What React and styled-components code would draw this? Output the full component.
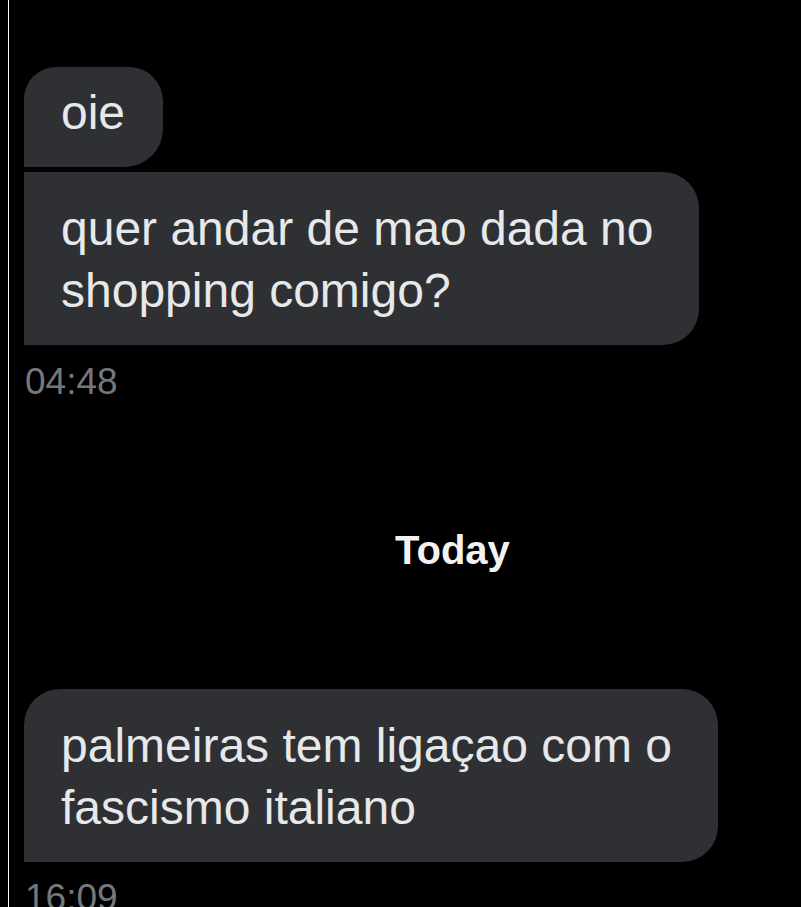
import React from "react";
import styled, { createGlobalStyle } from "styled-components";

const GlobalStyle = createGlobalStyle`
  html, body {
    margin: 0;
    padding: 0;
    background: #000;
  }
  body {
    font-family: "Liberation Sans", Arial, sans-serif;
  }
`;

const Page = styled.div`
  margin-left: 8px;
  border-left: 1px solid #ffffff;
  min-height: 100vh;
  box-sizing: border-box;
  padding: 67px 0 0 15px;
  display: flex;
  flex-direction: column;
  align-items: flex-start;
  overflow: hidden;
  background: #000;
`;

const Group = styled.div`
  display: flex;
  flex-direction: column;
  align-items: flex-start;
  gap: 5px;
  margin-top: ${(p) => p.$top || 0}px;
`;

const Bubble = styled.div`
  background: #2e3034;
  color: #e6e8e9;
  font-size: 48px;
  line-height: 62px;
  padding: ${(p) => (p.$tight ? 15 : 26)}px ${(p) => p.$right || 46}px 23px 37px;
  border-radius: ${(p) => p.$radius};
  white-space: nowrap;
`;

const Time = styled.div`
  margin-top: ${(p) => p.$top || 15}px;
  margin-left: 1px;
  font-size: 37px;
  line-height: 44px;
  color: #74787c;
`;

const DateDivider = styled.div`
  margin-top: 122px;
  padding-left: 371px;
  font-size: 40px;
  line-height: 48px;
  font-weight: 700;
  color: #f2f2f2;
`;

export default function App() {
  return (
    <>
      <GlobalStyle />
      <Page>
        <Group>
          <Bubble $tight $right={38} $radius="32px 34px 38px 0">
            oie
          </Bubble>
          <Bubble $radius="0 36px 36px 0">
            quer andar de mao dada no
            <br />
            shopping comigo?
          </Bubble>
        </Group>
        <Time>04:48</Time>
        <DateDivider>Today</DateDivider>
        <Group $top={115}>
          <Bubble $radius="36px 36px 36px 0">
            palmeiras tem ligaçao com o
            <br />
            fascismo italiano
          </Bubble>
        </Group>
        <Time $top={14}>16:09</Time>
      </Page>
    </>
  );
}
